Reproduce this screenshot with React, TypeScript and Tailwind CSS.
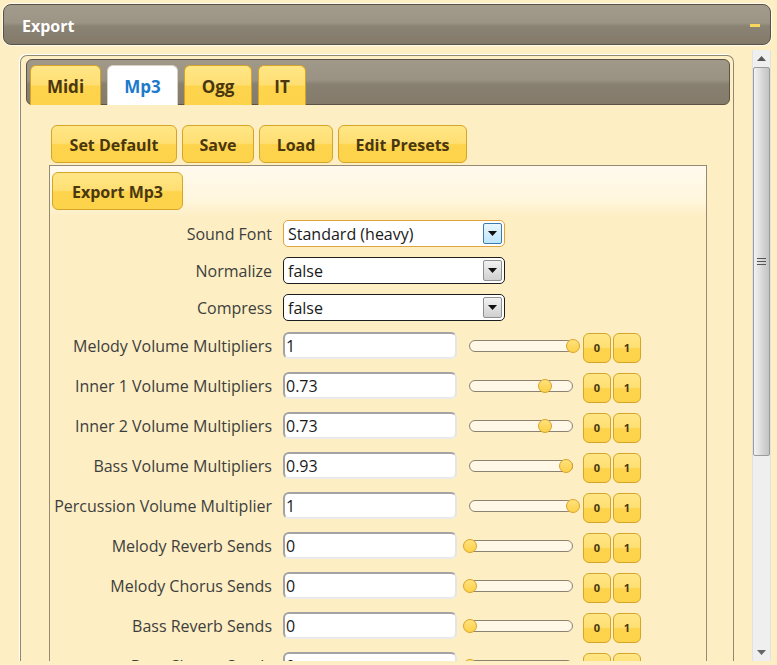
import React from "react";

const font = { fontFamily: '"Open Sans", "Noto Sans", "Liberation Sans", sans-serif' };

const rows = [
  { label: "Melody Volume Multipliers", value: "1", v: 1 },
  { label: "Inner 1 Volume Multipliers", value: "0.73", v: 0.73 },
  { label: "Inner 2 Volume Multipliers", value: "0.73", v: 0.73 },
  { label: "Bass Volume Multipliers", value: "0.93", v: 0.93 },
  { label: "Percussion Volume Multiplier", value: "1", v: 1 },
  { label: "Melody Reverb Sends", value: "0", v: 0 },
  { label: "Melody Chorus Sends", value: "0", v: 0 },
  { label: "Bass Reverb Sends", value: "0", v: 0 },
  { label: "Bass Chorus Sends", value: "0", v: 0 },
];

function YButton({ children, className = "" }: { children: React.ReactNode; className?: string }) {
  return (
    <div className={`flex items-center justify-center rounded-[6px] border border-[#d6a528] bg-[linear-gradient(to_bottom,#ffe686_0%,#ffdf73_48%,#fdd44c_52%,#fcd34a_100%)] font-bold text-[#4a3710] ${className}`}>
      {children}
    </div>
  );
}

function DropSelect({ value, focused }: { value: string; focused?: boolean }) {
  return (
    <div className={`flex h-[27px] w-[222px] items-center rounded-[5px] border bg-white pl-[4px] pr-[2px] ${focused ? "border-[#e2a33c]" : "border-[#1e1e1e]"}`}>
      <span className="flex-1 pt-[1px] text-[16px] text-[#1a1a1a]">{value}</span>
      <div className={`flex h-[21px] w-[19px] items-center justify-center rounded-[2px] border ${focused ? "border-[#3d7bad] bg-[linear-gradient(to_bottom,#eaf6fd,#bee6fd)]" : "border-[#8e8f8f] bg-[linear-gradient(to_bottom,#f2f2f2,#d0d0d0)]"}`}>
        <svg width="9" height="5" viewBox="0 0 9 5"><polygon points="0,0 9,0 4.5,5" fill="#111" /></svg>
      </div>
    </div>
  );
}

function Slider({ v }: { v: number }) {
  return (
    <div className="relative mt-[8px] h-[12px] w-[104px] self-start rounded-full border border-[#8d8270] bg-[#fff8e6]">
      <div
        className="absolute top-[-2px] h-[14px] w-[14px] rounded-full border border-[#d9a328] bg-[linear-gradient(to_bottom,#ffe27c,#fdd14a)]"
        style={{ left: -7 + v * 103 }}
      />
    </div>
  );
}

export default function App() {
  return (
    <div className="relative h-[665px] w-[777px] overflow-hidden bg-[#fdeec3]" style={font}>
      {/* Header */}
      <div className="ml-[3px] mt-[4px] flex h-[41px] w-[768px] items-center rounded-[8px] border border-[#5a5245] bg-[linear-gradient(to_bottom,#a39c8d_0%,#9c9485_45%,#8a8272_55%,#837a6a_100%)] pl-[18px] pr-[10px] shadow-[0_0_0_1px_#fffaf0]">
        <span className="flex-1 pt-[2px] text-[16px] font-bold text-white">Export</span>
        <div className="mt-[2px] h-[3px] w-[10px] bg-[#f6d65c]" />
      </div>

      <div className="flex h-[616px]">
        <div className="h-full w-[752px] overflow-hidden pl-[20px] pt-[10px]">
          {/* Tab panel */}
          <div className="h-[700px] w-[714px] rounded-t-[7px] border border-b-0 border-[#948770] pl-[5px] pr-[3px] pt-[3px] shadow-[-1px_-1px_0_#ffffff]">
            <div className="flex h-[46px] w-[704px] gap-[6px] rounded-[6px] border border-[#5b5345] bg-[linear-gradient(to_bottom,#a09989_0%,#9a9283_45%,#888070_55%,#847b6b_100%)] pl-[3px] pt-[5px]">
              {["Midi", "Mp3", "Ogg", "IT"].map((t) => (
                <div
                  key={t}
                  className={`flex h-[40px] items-center justify-center rounded-t-[6px] border border-b-0 pt-[2px] text-[17px] font-bold ${
                    t === "Mp3"
                      ? "border-[#d8d2c4] bg-white text-[#1b7acb]"
                      : "border-[#d6a528] bg-[linear-gradient(to_bottom,#ffe686_0%,#ffdf73_48%,#fdd44c_52%,#fcd34a_100%)] text-[#4a3710]"
                  } ${t === "Midi" ? "w-[71px]" : t === "Mp3" ? "w-[71px]" : t === "Ogg" ? "w-[68px]" : "w-[48px]"}`}
                >
                  {t}
                </div>
              ))}
            </div>

            {/* Preset buttons */}
            <div className="ml-[25px] mt-[20px] flex gap-[5px]">
              <YButton className="h-[38px] w-[126px] pt-[2px] text-[16px]">Set Default</YButton>
              <YButton className="h-[38px] w-[72px] pt-[2px] text-[16px]">Save</YButton>
              <YButton className="h-[38px] w-[74px] pt-[2px] text-[16px]">Load</YButton>
              <YButton className="h-[38px] w-[129px] pt-[2px] text-[16px]">Edit Presets</YButton>
            </div>

            {/* Content box */}
            <div className="ml-[23px] mt-[2px] w-[658px] border border-b-0 border-[#978a72] bg-[linear-gradient(to_bottom,#fffaee_0px,#fff6dc_35px,#fdeec3_50px,#fdeec3_100%)] pt-[6px]">
              <YButton className="ml-[2px] h-[38px] w-[131px] pt-[2px] text-[16px]">Export Mp3</YButton>

              <div className="mt-[10px] flex flex-col gap-[10px]">
                {[
                  { l: "Sound Font", v: "Standard (heavy)", f: true },
                  { l: "Normalize", v: "false" },
                  { l: "Compress", v: "false" },
                ].map((r) => (
                  <div key={r.l} className="flex items-center">
                    <div className="w-[222px] pt-[1px] text-right text-[16px] text-[#3e3e3e]">{r.l}</div>
                    <div className="ml-[11px]">
                      <DropSelect value={r.v} focused={r.f} />
                    </div>
                  </div>
                ))}
              </div>

              <div className="mt-[11px] flex flex-col gap-[9px]">
                {rows.map((r) => (
                  <div key={r.label} className="flex h-[31px] items-start">
                    <div className="h-[27px] w-[222px] whitespace-nowrap pt-[1px] text-right text-[16px] leading-[27px] text-[#3e3e3e]">{r.label}</div>
                    <div className="ml-[11px] flex h-[27px] w-[174px] items-center rounded-[6px] border-2 border-[#a3a3a3] border-b-[#eaeaea] border-r-[#e4e4e4] bg-white pl-[1px] pt-[1px] text-[16px] text-[#1a1a1a]">
                      {r.value}
                    </div>
                    <div className="ml-[12px]">
                      <Slider v={r.v} />
                    </div>
                    <YButton className="ml-[10px] mt-[1px] h-[30px] w-[28px] text-[11px]">0</YButton>
                    <YButton className="ml-[2px] mt-[1px] h-[30px] w-[28px] text-[11px]">1</YButton>
                  </div>
                ))}
              </div>
            </div>
          </div>
        </div>

        {/* Scrollbar */}
        <div className="mt-[5px] flex h-[611px] w-[19px] flex-col border-x border-[#e2e2e2] bg-[#efefef]">
          <div className="flex h-[17px] items-center justify-center">
            <svg width="9" height="5" viewBox="0 0 9 5"><polygon points="0,5 9,5 4.5,0" fill="#555" /></svg>
          </div>
          <div className="flex h-[389px] items-center justify-center rounded-[2px] border border-[#9b9b9b] bg-[linear-gradient(to_right,#f2f2f2_0%,#e2e2e2_35%,#d4d4d4_60%,#c4c4c4_100%)]">
            <div className="flex flex-col gap-[2px]">
              <div className="h-px w-[9px] bg-[#555]" />
              <div className="h-px w-[9px] bg-[#555]" />
              <div className="h-px w-[9px] bg-[#555]" />
            </div>
          </div>
          <div className="flex-1" />
          <div className="flex h-[17px] items-center justify-center">
            <svg width="9" height="5" viewBox="0 0 9 5"><polygon points="0,0 9,0 4.5,5" fill="#666" /></svg>
          </div>
        </div>
      </div>
    </div>
  );
}
